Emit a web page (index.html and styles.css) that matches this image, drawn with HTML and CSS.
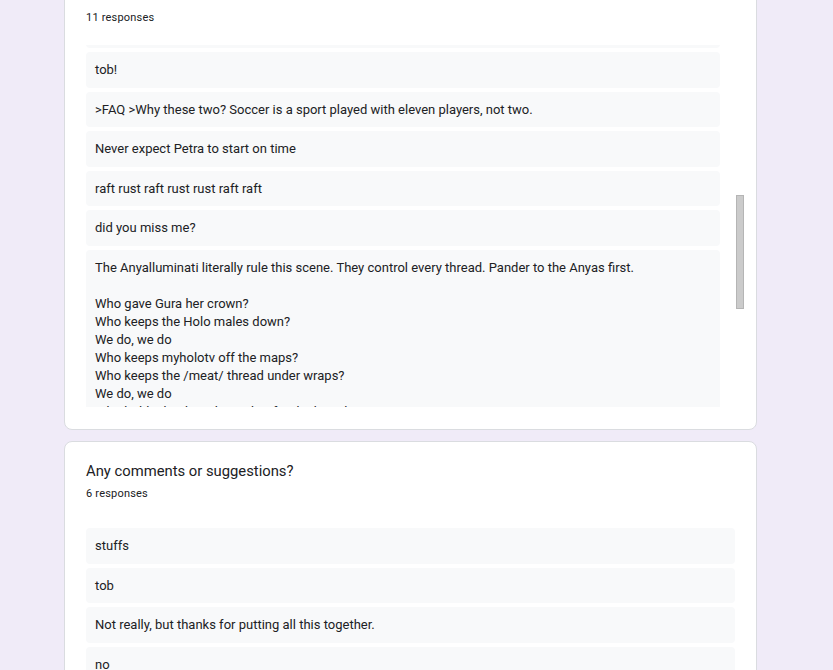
FILE: index.html
```html
<!DOCTYPE html>
<html lang="en">
<head>
<meta charset="utf-8">
<title>Responses</title>
<link rel="stylesheet" href="styles.css">
</head>
<body>
<main class="page">
  <section class="card card-first">
    <div class="count">11 responses</div>
    <div class="scroll">
      <div class="scroll-list">
        <div class="list list-scrolled">
          <div class="item">yes</div>
          <div class="item">tob!</div>
          <div class="item">&gt;FAQ &gt;Why these two? Soccer is a sport played with eleven players, not two.</div>
          <div class="item">Never expect Petra to start on time</div>
          <div class="item">raft rust raft rust rust raft raft</div>
          <div class="item">did you miss me?</div>
          <div class="item multi">The Anyalluminati literally rule this scene. They control every thread. Pander to the Anyas first.

Who gave Gura her crown?
Who keeps the Holo males down?
We do, we do
Who keeps myholotv off the maps?
Who keeps the /meat/ thread under wraps?
We do, we do
Who holds the thread together for the board?
We do, we do</div>
        </div>
      </div>
      <div class="scrollbar"><div class="thumb"></div></div>
    </div>
  </section>

  <section class="card card-second">
    <h2 class="title">Any comments or suggestions?</h2>
    <div class="count">6 responses</div>
    <div class="list list-plain">
      <div class="item">stuffs</div>
      <div class="item">tob</div>
      <div class="item">Not really, but thanks for putting all this together.</div>
      <div class="item">no</div>
      <div class="item">nope</div>
      <div class="item">thanks</div>
    </div>
  </section>
</main>
</body>
</html>
```

FILE: styles.css
```css
html, body {
  margin: 0;
  padding: 0;
}
body {
  background: #f0ebf8;
  font-family: Roboto, "Noto Sans", Arial, sans-serif;
  color: #202124;
  overflow: hidden;
  height: 670px;
}
.page {
  margin-left: 64px;
  width: 693px;
  display: flex;
  flex-direction: column;
  gap: 11px;
}
.card {
  background: #fff;
  border: 1px solid #dadce0;
  border-radius: 8px;
  padding: 0 21px;
}
.card-first {
  margin-top: -16px;
  border-top-left-radius: 0;
  border-top-right-radius: 0;
  padding-top: 25px;
  padding-bottom: 22px;
}
.card-second {
  padding-top: 17px;
  padding-bottom: 24px;
}
.title {
  margin: 0;
  font-size: 14.8px;
  font-weight: 400;
  line-height: 24px;
  color: #202124;
}
.count {
  font-size: 11px;
  line-height: 16px;
  color: #202124;
  letter-spacing: 0.2px;
}
.card-second .count {
  margin-top: 3px;
}
.scroll {
  margin-top: 19px;
  margin-right: -12px;
  height: 362px;
  display: flex;
  overflow: hidden;
}
.scroll-list {
  width: 634px;
  overflow: hidden;
}
.list {
  display: flex;
  flex-direction: column;
  gap: 4px;
}
.list-scrolled {
  margin-top: -32.6px;
}
.list-plain {
  margin-top: 26px;
}
.item {
  background: #f8f9fa;
  border-radius: 4px;
  padding: 9px 9px 8.6px;
  font-size: 13px;
  line-height: 18px;
  color: #202124;
}
.multi {
  white-space: pre-line;
}
.scrollbar {
  margin-left: 13px;
  width: 14px;
  display: flex;
  justify-content: center;
}
.thumb {
  margin-top: 150px;
  width: 6px;
  height: 112px;
  background: #cbcbcb;
  border: 1px solid #b5b5b5;
}
```
